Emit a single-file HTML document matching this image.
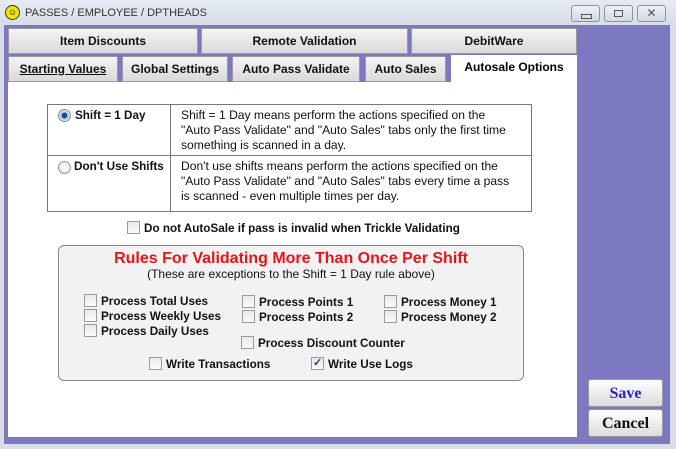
<!DOCTYPE html>
<html><head><style>
body{margin:0;width:676px;height:449px;overflow:hidden;background:#d8dde6;font-family:"Liberation Sans",Arial,sans-serif;position:relative}
.abs{position:absolute}
.title{left:0;top:0;width:676px;height:27px;background:linear-gradient(#e6ebf2,#d6dde8);}
.frame{left:4px;top:25px;width:666px;height:419px;background:#7c79c2;}
.tab{position:absolute;background:linear-gradient(#f4f4f4,#d9d9d9);border:1px solid #9a9a9a;font-weight:bold;font-size:12px;text-align:center;color:#111;box-sizing:border-box}
.panel{left:8px;top:82px;width:569px;height:355px;background:#fff;}
.cb{display:inline-block;width:11px;height:11px;border:1px solid #9b9b9b;background:linear-gradient(#e9e9e9,#fafafa);vertical-align:-2px;margin-right:4px;box-sizing:content-box}
.lbl{font-weight:bold;font-size:11.7px;color:#111;white-space:nowrap}
.desc{font-size:12.1px;color:#111;line-height:15px;white-space:nowrap}
.btn{position:absolute;left:588px;width:75px;height:28px;border:1px solid #999;border-radius:3px;background:linear-gradient(#fff,#dcdcdc);font-family:"Liberation Serif",serif;font-weight:bold;font-size:16px;text-align:center;line-height:27px;box-sizing:border-box}
.wb{position:absolute;top:5px;width:29px;height:17px;border:1px solid #8a93a4;border-radius:3px;background:linear-gradient(#eef1f6,#d3d9e3);box-sizing:border-box}
</style></head><body>
<div class="abs title"></div>
<div class="abs" style="left:5px;top:5px;width:15px;height:15px;border-radius:50%;background:#f5e400;border:1px solid #333;box-sizing:border-box;font-size:9px;line-height:12px;text-align:center">☺</div>
<div class="abs" style="left:25px;top:7px;font-size:11px;color:#333">PASSES / EMPLOYEE / DPTHEADS</div>
<div class="wb" style="left:571px"><div class="abs" style="left:9px;top:8px;width:9px;height:3px;border:1px solid #555"></div></div>
<div class="wb" style="left:604px"><div class="abs" style="left:9px;top:4px;width:7px;height:5px;border:1px solid #555"></div></div>
<div class="wb" style="left:637px;text-align:center;font-size:12px;line-height:15px;color:#555">✕</div>
<div class="abs frame"></div>
<div class="tab" style="left:8px;top:28px;width:190px;height:26px;line-height:25px">Item Discounts</div>
<div class="tab" style="left:201px;top:28px;width:207px;height:26px;line-height:25px">Remote Validation</div>
<div class="tab" style="left:411px;top:28px;width:166px;height:26px;line-height:25px">DebitWare</div>
<div class="tab" style="left:8px;top:56px;width:110px;height:26px;line-height:25px;text-decoration:underline">Starting Values</div>
<div class="tab" style="left:122px;top:56px;width:106px;height:26px;line-height:25px">Global Settings</div>
<div class="tab" style="left:232px;top:56px;width:128px;height:26px;line-height:25px">Auto Pass Validate</div>
<div class="tab" style="left:365px;top:56px;width:81px;height:26px;line-height:25px">Auto Sales</div>
<div class="abs panel"></div>
<div class="abs" style="left:451px;top:55px;width:126px;height:30px;background:#fff;font-weight:bold;font-size:12px;text-align:center;line-height:24px">Autosale Options</div>
<div class="abs" style="left:47px;top:104px;width:485px;height:108px;border:1px solid #777;box-sizing:border-box"></div>
<div class="abs" style="left:47px;top:155px;width:485px;height:1px;background:#777"></div>
<div class="abs" style="left:170px;top:104px;width:1px;height:108px;background:#777"></div>
<div class="abs" style="left:58px;top:109px;width:11px;height:11px;border-radius:50%;border:1px solid #888;background:radial-gradient(#1a4a7a 30%,#8fc0e8 40%,#eee 70%)"></div>
<div class="abs lbl" style="left:75px;top:109px">Shift = 1 Day</div>
<div class="abs lbl" style="left:74px;top:160px">Don't Use Shifts</div>
<div class="abs" style="left:58px;top:161px;width:11px;height:11px;border-radius:50%;border:1px solid #999;background:radial-gradient(#fff,#ddd)"></div>
<div class="abs desc" style="left:181px;top:108px">Shift = 1 Day means perform the actions specified on the<br>"Auto Pass Validate" and "Auto Sales" tabs only the first time<br>something is scanned in a day.</div>
<div class="abs desc" style="left:181px;top:159px">Don't use shifts means perform the actions specified on the<br>"Auto Pass Validate" and "Auto Sales" tabs every time a pass<br>is scanned - even multiple times per day.</div>
<div class="abs lbl" style="left:127px;top:221px"><span class="cb"></span>Do not AutoSale if pass is invalid when Trickle Validating</div>
<div class="abs" style="left:58px;top:245px;width:466px;height:136px;border:1px solid #888;border-radius:6px;background:#f2f2f2;box-sizing:border-box"></div>
<div class="abs" style="left:58px;top:250px;width:466px;text-align:center;color:#e8141a;font-weight:bold;font-size:16px">Rules For Validating More Than Once Per Shift</div>
<div class="abs" style="left:58px;top:267px;width:466px;text-align:center;font-size:12px;color:#111">(These are exceptions to the Shift = 1 Day rule above)</div>
<div class="abs lbl" style="left:84px;top:294px"><span class="cb"></span>Process Total Uses</div>
<div class="abs lbl" style="left:84px;top:309px"><span class="cb"></span>Process Weekly Uses</div>
<div class="abs lbl" style="left:84px;top:324px"><span class="cb"></span>Process Daily Uses</div>
<div class="abs lbl" style="left:242px;top:295px"><span class="cb"></span>Process Points 1</div>
<div class="abs lbl" style="left:242px;top:310px"><span class="cb"></span>Process Points 2</div>
<div class="abs lbl" style="left:384px;top:295px"><span class="cb"></span>Process Money 1</div>
<div class="abs lbl" style="left:384px;top:310px"><span class="cb"></span>Process Money 2</div>
<div class="abs lbl" style="left:241px;top:336px"><span class="cb"></span>Process Discount Counter</div>
<div class="abs lbl" style="left:149px;top:357px"><span class="cb"></span>Write Transactions</div>
<div class="abs lbl" style="left:311px;top:357px"><span class="cb" style="position:relative"><span style="position:absolute;left:1px;top:-2px;font-size:11px;color:#2a3a8a">✓</span></span>Write Use Logs</div>
<div class="btn" style="top:379px;color:#2222cc">Save</div>
<div class="btn" style="top:409px;color:#111">Cancel</div>
</body></html>
